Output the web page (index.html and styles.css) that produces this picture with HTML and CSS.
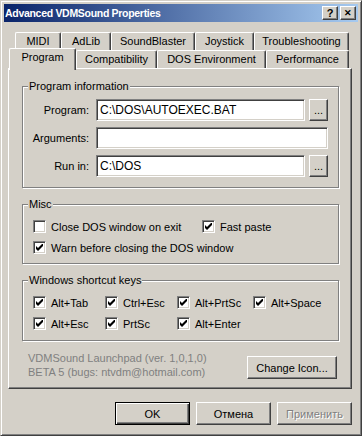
FILE: index.html
```html
<!DOCTYPE html>
<html lang="en">
<head>
  <meta charset="UTF-8">
  <title>Advanced VDMSound Properties</title>
  <link rel="stylesheet" href="styles.css">
</head>
<body>
  <div class="window">
    <div class="titlebar">
      <span class="title">Advanced VDMSound Properties</span>
      <span class="cap-btn">?</span>
      <span class="cap-btn close">&#x2715;</span>
    </div>

    <div class="tab-row back">
      <div class="tab w-midi">MIDI</div>
      <div class="tab w-adlib">AdLib</div>
      <div class="tab w-sb">SoundBlaster</div>
      <div class="tab w-joy">Joystick</div>
      <div class="tab w-trouble">Troubleshooting</div>
    </div>
    <div class="tab-row front">
      <div class="tab active w-program">Program</div>
      <div class="tab w-compat">Compatibility</div>
      <div class="tab w-dos">DOS Environment</div>
      <div class="tab w-perf">Performance</div>
    </div>

    <div class="panel">
      <div class="group info">
        <span class="group-title">Program information</span>
        <label class="field-label">Program:</label>
        <div class="textbox">C:\DOS\AUTOEXEC.BAT</div>
        <button class="btn browse">...</button>
        <label class="field-label">Arguments:</label>
        <div class="textbox wide"></div>
        <label class="field-label">Run in:</label>
        <div class="textbox">C:\DOS</div>
        <button class="btn browse">...</button>
      </div>

      <div class="group misc">
        <span class="group-title">Misc</span>
        <div class="check-row">
          <span class="check col-a"><span class="box"></span>Close DOS window on exit</span>
          <span class="check"><span class="box on"></span>Fast paste</span>
        </div>
        <div class="check-row">
          <span class="check"><span class="box on"></span>Warn before closing the DOS window</span>
        </div>
      </div>

      <div class="group keys">
        <span class="group-title">Windows shortcut keys</span>
        <div class="keys-grid">
          <span class="check"><span class="box on"></span>Alt+Tab</span>
          <span class="check"><span class="box on"></span>Ctrl+Esc</span>
          <span class="check"><span class="box on"></span>Alt+PrtSc</span>
          <span class="check"><span class="box on"></span>Alt+Space</span>
          <span class="check"><span class="box on"></span>Alt+Esc</span>
          <span class="check"><span class="box on"></span>PrtSc</span>
          <span class="check"><span class="box on"></span>Alt+Enter</span>
        </div>
      </div>

      <div class="about">
        <div class="version">
          <div>VDMSound Launchpad (ver. 1,0,1,0)</div>
          <div>BETA 5 (bugs: ntvdm@hotmail.com)</div>
        </div>
        <button class="btn change-icon">Change Icon...</button>
      </div>
    </div>

    <div class="dialog-buttons">
      <button class="btn default">OK</button>
      <button class="btn">Отмена</button>
      <button class="btn disabled">Применить</button>
    </div>
  </div>
</body>
</html>
```

FILE: styles.css
```css
body {
  margin: 0;
  font-family: "Liberation Sans", Arial, sans-serif;
  font-size: 11px;
  color: #000;
}
.window {
  width: 362px;
  height: 436px;
  box-sizing: border-box;
  background: #d4d0c8;
  border: 1px solid;
  border-color: #d4d0c8 #404040 #404040 #d4d0c8;
  box-shadow: inset 1px 1px #fff, inset -1px -1px #808080;
  padding: 3px;
  display: flex;
  flex-direction: column;
}
.titlebar {
  height: 18px;
  display: flex;
  align-items: center;
  padding: 0 2px 0 1px;
  background: linear-gradient(to right, #0a246a, #a6caf0);
  color: #fff;
}
.title {
  flex: 1;
  font-weight: bold;
  font-size: 10.5px;
  letter-spacing: -0.3px;
}
.cap-btn {
  width: 16px;
  height: 14px;
  box-sizing: border-box;
  background: #d4d0c8;
  color: #000;
  border: 1px solid;
  border-color: #fff #404040 #404040 #fff;
  box-shadow: inset -1px -1px #808080;
  font-weight: bold;
  font-size: 11px;
  line-height: 12px;
  text-align: center;
}
.cap-btn.close {
  margin-left: 2px;
  font-size: 9px;
}

/* tabs */
.tab-row {
  display: flex;
  align-items: flex-end;
  height: 18px;
}
.tab-row.back {
  margin: 10px 0 0 11px;
}
.tab-row.front {
  margin-left: 5px;
}
.tab {
  height: 18px;
  box-sizing: border-box;
  border: 1px solid #fff;
  border-bottom: 0;
  border-right-color: #404040;
  border-radius: 2px 2px 0 0;
  box-shadow: inset -1px 0 #808080;
  background: #d4d0c8;
  text-align: center;
  line-height: 16px;
}
.tab.active {
  height: 22px;
  margin-bottom: -2px;
  position: relative;
  z-index: 1;
  line-height: 17px;
}
.w-midi { width: 46px; }
.w-adlib { width: 50px; }
.w-sb { width: 84px; }
.w-joy { width: 59px; }
.w-trouble { width: 95px; }
.w-program { width: 67px; }
.w-compat { width: 81px; }
.w-dos { width: 109px; }
.w-perf { width: 83px; }

/* page */
.panel {
  margin-left: 4px;
  width: 344px;
  height: 321px;
  box-sizing: border-box;
  border: 1px solid;
  border-color: #fff #404040 #404040 #fff;
  box-shadow: inset -1px -1px #808080;
  padding: 17px 12px 0 13px;
  display: flex;
  flex-direction: column;
}
.group {
  position: relative;
  border: 1px solid #808080;
  box-shadow: inset 1px 1px #fff, 1px 1px #fff;
}
.group-title {
  position: absolute;
  top: -7px;
  left: 5px;
  padding: 0 1px;
  background: #d4d0c8;
  line-height: 13px;
}
.group + .group {
  margin-top: 16px;
}
.info {
  display: grid;
  grid-template-columns: 63px 209px 19px;
  column-gap: 4px;
  row-gap: 6px;
  align-items: center;
  padding: 12px 10px 10px 6px;
}
.field-label {
  grid-column: 1;
  text-align: right;
  margin-right: 3px;
}
.textbox {
  grid-column: 2;
  height: 22px;
  box-sizing: border-box;
  background: #fff;
  border: 1px solid;
  border-color: #808080 #fff #fff #808080;
  box-shadow: inset 1px 1px #404040, inset -1px -1px #d4d0c8;
  padding: 0 3px;
  line-height: 20px;
  font-size: 12px;
}
.textbox.wide {
  grid-column: 2 / 4;
}
.btn {
  font: inherit;
  color: #000;
  background: #d4d0c8;
  border: 1px solid;
  border-color: #fff #404040 #404040 #fff;
  box-shadow: inset -1px -1px #808080;
  padding: 0;
  box-sizing: border-box;
}
.browse {
  grid-column: 3;
  height: 22px;
  line-height: 16px;
}

/* checkboxes */
.misc {
  padding: 15px 0 9px 10px;
}
.check-row {
  display: flex;
  height: 13px;
}
.check-row + .check-row {
  margin-top: 8px;
}
.check {
  display: flex;
  align-items: center;
  height: 13px;
  white-space: nowrap;
}
.col-a {
  width: 169px;
}
.box {
  width: 13px;
  height: 13px;
  box-sizing: border-box;
  margin-right: 5px;
  flex-shrink: 0;
  background: #fff;
  border: 1px solid;
  border-color: #808080 #fff #fff #808080;
  box-shadow: inset 1px 1px #404040, inset -1px -1px #d4d0c8;
}
.box.on {
  background: #fff url("data:image/svg+xml,%3Csvg xmlns='http://www.w3.org/2000/svg' width='7' height='7'%3E%3Cpath d='M0 2v3l2 2l5-5v-3l-5 5z' fill='black'/%3E%3C/svg%3E") no-repeat 2px 2px;
}
.keys {
  padding: 15px 0 10px 10px;
}
.keys-grid {
  display: grid;
  grid-template-columns: 72px 72px 76px 1fr;
  grid-auto-rows: 13px;
  row-gap: 8px;
}

/* footer of page */
.about {
  display: flex;
  align-items: center;
  justify-content: space-between;
  margin-top: 15px;
  padding-left: 6px;
  padding-right: 2px;
}
.version {
  color: #808080;
  line-height: 14px;
  margin-top: -5px;
}
.change-icon {
  width: 90px;
  height: 23px;
}

.dialog-buttons {
  display: flex;
  justify-content: flex-end;
  gap: 6px;
  margin-top: 13px;
  padding-right: 6px;
}
.dialog-buttons .btn {
  width: 75px;
  height: 23px;
}
.btn.default {
  border-color: #000;
  box-shadow: inset 1px 1px #fff, inset -1px -1px #404040, inset -2px -2px #808080;
}
.btn.disabled {
  color: #808080;
  text-shadow: 1px 1px #fff;
}
```
